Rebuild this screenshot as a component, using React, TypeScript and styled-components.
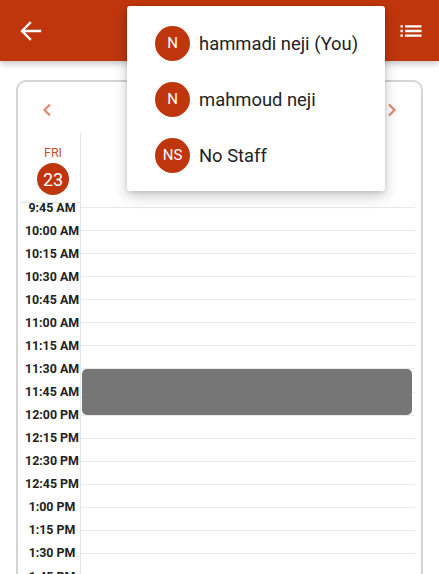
import React from "react";
import styled, { createGlobalStyle } from "styled-components";

const GlobalStyle = createGlobalStyle`
  html, body { margin: 0; padding: 0; background: #fff; }
  body { font-family: Roboto, "Noto Sans", Arial, sans-serif; }
  * { box-sizing: border-box; }
`;

const BRAND = "#bf360c";

const Page = styled.div`
  position: relative;
  width: 439px;
  height: 574px;
  overflow: hidden;
  background: #fff;
  display: flex;
  flex-direction: column;
`;

const Header = styled.header`
  flex: none;
  height: 61px;
  background: ${BRAND};
  display: flex;
  align-items: center;
  justify-content: space-between;
  padding: 0 14px 0 20px;
  box-shadow: 0 3px 6px rgba(0, 0, 0, 0.22);
  position: relative;
  z-index: 1;
`;

const IconButton = styled.button`
  border: 0;
  background: transparent;
  padding: 0;
  display: flex;
  align-items: center;
  justify-content: center;
  color: #fff;
  cursor: pointer;
`;

const Card = styled.section`
  flex: 1;
  margin: 19px 16px 0;
  border: 2px solid #d5d5d5;
  border-bottom: none;
  border-radius: 10px 10px 0 0;
  display: flex;
  flex-direction: column;
  min-height: 0;
`;

const NavRow = styled.div`
  flex: none;
  height: 51px;
  display: flex;
  justify-content: space-between;
  align-items: flex-start;
  padding: 21px 24px 0 24px;
`;

const Chevron = styled.svg`
  width: 10px;
  height: 14px;
  display: block;
`;

const DayHeader = styled.div`
  flex: none;
  display: grid;
  grid-template-columns: 62px 1fr;
  height: 70px;
`;

const DayCell = styled.div`
  display: flex;
  flex-direction: column;
  align-items: center;
  padding: 12px 0 0 6px;
  border-bottom: 1px solid #e6e6e6;
  margin-left: 2px;
`;

const DayName = styled.span`
  font-size: 12.5px;
  color: #c4512c;
  line-height: 16px;
`;

const DayNumber = styled.span`
  margin-top: 2px;
  width: 32px;
  height: 32px;
  border-radius: 50%;
  background: ${BRAND};
  color: #fff;
  font-size: 18px;
  display: flex;
  align-items: center;
  justify-content: center;
`;

const DayColumnHead = styled.div`
  border-left: 1px solid #e6e6e6;
`;

const Viewport = styled.div`
  flex: 1;
  min-height: 0;
`;

const TimeList = styled.div`
  position: relative;
  margin-top: -7px;
`;

const TimeRow = styled.div`
  display: grid;
  grid-template-columns: 62px 1fr;
  height: 23.07px;
`;

const TimeLabel = styled.span`
  display: flex;
  align-items: center;
  justify-content: center;
  padding-left: 6px;
  font-size: 12.4px;
  line-height: 12px;
  font-weight: 700;
  color: #222;
  white-space: nowrap;
`;

const SlotCell = styled.div`
  border-left: 1px solid #e6e6e6;
  display: flex;
  align-items: center;
  padding-right: 6px;
`;

const SlotLine = styled.div`
  flex: 1;
  height: 1px;
  background: #e8e8e8;
`;

const EventBlock = styled.div`
  position: absolute;
  left: 64px;
  right: 9px;
  background: #767676;
  border-radius: 5px;
`;

const Menu = styled.ul`
  position: absolute;
  left: 127px;
  top: 6px;
  width: 258px;
  margin: 0;
  padding: 9px 0 8px;
  list-style: none;
  background: #fff;
  border-radius: 3px;
  box-shadow: 0 5px 14px rgba(0, 0, 0, 0.22), 0 1px 4px rgba(0, 0, 0, 0.12);
  z-index: 5;
`;

const MenuItem = styled.li`
  height: 56px;
  display: flex;
  align-items: center;
  gap: 9px;
  padding-left: 28px;
`;

const Avatar = styled.span`
  width: 35px;
  height: 35px;
  border-radius: 50%;
  background: ${BRAND};
  color: #fff;
  font-size: 15px;
  display: flex;
  align-items: center;
  justify-content: center;
  flex: none;
`;

const MenuText = styled.span`
  font-size: 18.4px;
  color: #222;
  white-space: nowrap;
`;

const times = [
  "9:45 AM",
  "10:00 AM",
  "10:15 AM",
  "10:30 AM",
  "10:45 AM",
  "11:00 AM",
  "11:15 AM",
  "11:30 AM",
  "11:45 AM",
  "12:00 PM",
  "12:15 PM",
  "12:30 PM",
  "12:45 PM",
  "1:00 PM",
  "1:15 PM",
  "1:30 PM",
  "1:45 PM",
  "2:00 PM",
];

const ROW_H = 23.07;
const event = { start: 7, span: 2 };

const staff = [
  { initials: "N", name: "hammadi neji (You)" },
  { initials: "N", name: "mahmoud neji" },
  { initials: "NS", name: "No Staff" },
];

export default function App() {
  return (
    <>
      <GlobalStyle />
      <Page>
        <Header>
          <IconButton aria-label="Back">
            <svg width="22" height="20" viewBox="0 0 22 20" fill="none">
              <path
                d="M20 10H2.5M10 2L2 10l8 8"
                stroke="#fff"
                strokeWidth="2.3"
                strokeLinecap="square"
                strokeLinejoin="miter"
              />
            </svg>
          </IconButton>
          <IconButton aria-label="List">
            <svg width="28" height="28" viewBox="0 0 24 24" fill="#fff">
              <path d="M3 13h2v-2H3v2zm0 4h2v-2H3v2zm0-8h2V7H3v2zm4 4h14v-2H7v2zm0 4h14v-2H7v2zM7 7v2h14V7H7z" />
            </svg>
          </IconButton>
        </Header>

        <Card>
          <NavRow>
            <Chevron viewBox="0 0 10 14" fill="none">
              <path d="M8 1.5L2.5 7 8 12.5" stroke="#dc8a6e" strokeWidth="2.2" />
            </Chevron>
            <Chevron viewBox="0 0 10 14" fill="none">
              <path d="M2 1.5L7.5 7 2 12.5" stroke="#dc8a6e" strokeWidth="2.2" />
            </Chevron>
          </NavRow>
          <DayHeader>
            <DayCell>
              <DayName>FRI</DayName>
              <DayNumber>23</DayNumber>
            </DayCell>
            <DayColumnHead />
          </DayHeader>
          <Viewport>
            <TimeList>
              {times.map((t) => (
                <TimeRow key={t}>
                  <TimeLabel>{t}</TimeLabel>
                  <SlotCell>
                    <SlotLine />
                  </SlotCell>
                </TimeRow>
              ))}
              <EventBlock
                style={{
                  top: Math.round(event.start * ROW_H + ROW_H / 2),
                  height: Math.round(event.span * ROW_H),
                }}
              />
            </TimeList>
          </Viewport>
        </Card>

        <Menu>
          {staff.map((s) => (
            <MenuItem key={s.name}>
              <Avatar>{s.initials}</Avatar>
              <MenuText>{s.name}</MenuText>
            </MenuItem>
          ))}
        </Menu>
      </Page>
    </>
  );
}
